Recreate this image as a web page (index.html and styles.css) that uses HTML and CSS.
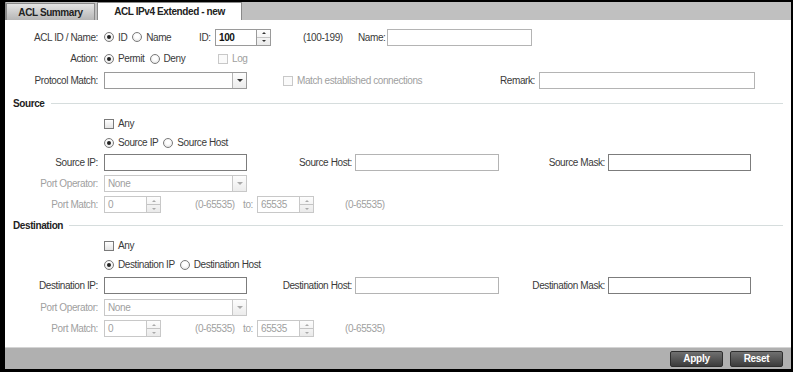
FILE: index.html
```html
<!DOCTYPE html>
<html>
<head>
<meta charset="utf-8">
<link rel="stylesheet" href="styles.css">
</head>
<body>
<div class="frame">
  <div class="tabbar">
    <div class="tab tab-summary">ACL Summary</div>
    <div class="tab tab-active">ACL IPv4 Extended - new</div>
  </div>
  <div class="content">
    <div class="row h22">
      <span class="lbl">ACL ID / Name:</span>
      <div class="cell w95">
        <span class="opt"><span class="radio on"></span>ID</span>
        <span class="opt"><span class="radio"></span>Name</span>
      </div>
      <span class="cell w13">ID:</span>
      <div class="spin w56 ml3"><span class="spin-val strong">100</span><span class="spin-btn"><i class="up"></i><i class="dn"></i></span></div>
      <span class="cell w55 ml32">(100-199)</span>
      <span class="cell w29">Name:</span>
      <span class="txt w145"></span>
    </div>
    <div class="row h21">
      <span class="lbl">Action:</span>
      <div class="cell w114">
        <span class="opt"><span class="radio on"></span>Permit</span>
        <span class="opt"><span class="radio"></span>Deny</span>
      </div>
      <span class="opt dis"><span class="check dis"></span>Log</span>
    </div>
    <div class="row h23">
      <span class="lbl">Protocol Match:</span>
      <div class="sel w143"><span class="sel-val"></span><span class="sel-btn"><i class="dn"></i></span></div>
      <div class="cell w217 ml36"><span class="opt dis"><span class="check dis"></span>Match established connections</span></div>
      <span class="cell w39">Remark:</span>
      <span class="txt w216"></span>
    </div>

    <div class="sect h22"><span>Source</span></div>
    <div class="row h19">
      <span class="lbl"></span>
      <span class="opt"><span class="check"></span>Any</span>
    </div>
    <div class="row h19">
      <span class="lbl"></span>
      <span class="opt"><span class="radio on"></span>Source IP</span>
      <span class="opt"><span class="radio"></span>Source Host</span>
    </div>
    <div class="row h21">
      <span class="lbl">Source IP:</span>
      <span class="txt dark w143"></span>
      <span class="rlbl w105">Source Host:</span>
      <span class="txt w144"></span>
      <span class="rlbl w106">Source Mask:</span>
      <span class="txt dark w143"></span>
    </div>
    <div class="row h21">
      <span class="lbl dis">Port Operator:</span>
      <div class="sel dis w143"><span class="sel-val">None</span><span class="sel-btn"><i class="dn"></i></span></div>
    </div>
    <div class="row h21">
      <span class="lbl dis">Port Match:</span>
      <div class="spin dis w57"><span class="spin-val">0</span><span class="spin-btn"><i class="up"></i><i class="dn"></i></span></div>
      <span class="cell dis w48 ml34">(0-65535)</span>
      <span class="cell dis w14">to:</span>
      <div class="spin dis w57"><span class="spin-val">65535</span><span class="spin-btn"><i class="up"></i><i class="dn"></i></span></div>
      <span class="cell dis ml31">(0-65535)</span>
    </div>

    <div class="sect h21"><span>Destination</span></div>
    <div class="row h19">
      <span class="lbl"></span>
      <span class="opt"><span class="check"></span>Any</span>
    </div>
    <div class="row h19">
      <span class="lbl"></span>
      <span class="opt"><span class="radio on"></span>Destination IP</span>
      <span class="opt"><span class="radio"></span>Destination Host</span>
    </div>
    <div class="row h22">
      <span class="lbl">Destination IP:</span>
      <span class="txt dark w143"></span>
      <span class="rlbl w105">Destination Host:</span>
      <span class="txt w144"></span>
      <span class="rlbl w106">Destination Mask:</span>
      <span class="txt dark w143"></span>
    </div>
    <div class="row h22">
      <span class="lbl dis">Port Operator:</span>
      <div class="sel dis w143"><span class="sel-val">None</span><span class="sel-btn"><i class="dn"></i></span></div>
    </div>
    <div class="row h21">
      <span class="lbl dis">Port Match:</span>
      <div class="spin dis w57"><span class="spin-val">0</span><span class="spin-btn"><i class="up"></i><i class="dn"></i></span></div>
      <span class="cell dis w48 ml34">(0-65535)</span>
      <span class="cell dis w14">to:</span>
      <div class="spin dis w57"><span class="spin-val">65535</span><span class="spin-btn"><i class="up"></i><i class="dn"></i></span></div>
      <span class="cell dis ml31">(0-65535)</span>
    </div>
  </div>
  <div class="footer">
    <button class="btn">Apply</button>
    <button class="btn">Reset</button>
  </div>
</div>
</body>
</html>
```
FILE: styles.css
```css
html, body {
  margin: 0;
  padding: 0;
  background: #000;
}
body {
  font-family: "Liberation Sans", Arial, sans-serif;
  font-size: 10px;
  letter-spacing: -0.4px;
  color: #3a3a3a;
}
.frame {
  width: 793px;
  height: 372px;
  box-sizing: border-box;
  border-style: solid;
  border-color: #000;
  border-width: 2px 2px 3px 5px;
  background: #fff;
  display: flex;
  flex-direction: column;
}
.tabbar {
  height: 18px;
  flex: none;
  background: #c0c0c0;
  border-left: 1px solid #8a8a8a;
  display: flex;
  align-items: flex-end;
  gap: 2px;
}
.tab {
  height: 17px;
  line-height: 18px;
  box-sizing: border-box;
  border: 1px solid #8a8a8a;
  border-bottom: none;
  font-weight: bold;
  font-size: 10px;
  color: #222;
  text-align: center;
  letter-spacing: -0.4px;
}
.tab-summary {
  width: 89px;
  background: linear-gradient(#e4e4e4, #b6b6b6);
}
.tab-active {
  width: 145px;
  background: #fff;
  height: 18px;
}
.content {
  flex: 1;
  padding-top: 6px;
}
.row {
  display: flex;
  align-items: center;
  white-space: nowrap;
}
.h19 { height: 19px; }
.h21 { height: 21px; }
.h22 { height: 22px; }
.h23 { height: 23px; }
.lbl {
  width: 93px;
  margin-right: 6px;
  text-align: right;
  flex: none;
}
.rlbl {
  flex: none;
  text-align: right;
  margin-right: 3px;
}
.cell {
  flex: none;
  display: flex;
  align-items: center;
}
.dis { color: #a0a0a0; }
.strong { font-weight: bold; color: #111; }
.w13 { width: 13px; }
.w14 { width: 14px; }
.w29 { width: 29px; }
.w39 { width: 39px; }
.w48 { width: 48px; }
.w55 { width: 55px; }
.w56 { width: 56px; }
.w57 { width: 57px; }
.w95 { width: 95px; }
.w105 { width: 105px; }
.w106 { width: 106px; }
.w114 { width: 114px; }
.w143 { width: 143px; }
.w144 { width: 144px; }
.w145 { width: 145px; }
.w216 { width: 216px; }
.w217 { width: 217px; }
.ml3 { margin-left: 3px; }
.ml31 { margin-left: 31px; }
.ml32 { margin-left: 32px; }
.ml34 { margin-left: 34px; }
.ml36 { margin-left: 36px; }

.opt {
  display: inline-flex;
  align-items: center;
  gap: 4px;
  margin-right: 5px;
}
.radio {
  width: 10px;
  height: 10px;
  box-sizing: border-box;
  border: 1px solid #7a7a7a;
  border-radius: 50%;
  background: radial-gradient(circle at 50% 40%, #fff 30%, #dcdcdc 100%);
  display: inline-flex;
  align-items: center;
  justify-content: center;
  flex: none;
}
.radio.on::after {
  content: "";
  width: 4px;
  height: 4px;
  border-radius: 50%;
  background: #222;
}
.check {
  width: 10px;
  height: 10px;
  box-sizing: border-box;
  border: 1px solid #7a7a7a;
  background: linear-gradient(#fff, #e4e4e4);
  flex: none;
}
.check.dis {
  border-color: #c8c8c8;
  background: #fafafa;
}

.txt {
  flex: none;
  height: 17px;
  box-sizing: border-box;
  border: 1px solid #b4b4b4;
  background: #fff;
}
.txt.dark {
  border-color: #7c7c7c;
}

.spin, .sel {
  flex: none;
  height: 17px;
  box-sizing: border-box;
  border: 1px solid #9a9a9a;
  display: flex;
  background: #fff;
}
.spin-val, .sel-val {
  flex: 1;
  padding-left: 3px;
  line-height: 15px;
}
.spin-btn {
  width: 13px;
  border-left: 1px solid #9a9a9a;
  display: flex;
  flex-direction: column;
  background: linear-gradient(#fdfdfd, #eaeaea);
}
.spin-btn i {
  flex: 1;
  display: flex;
  align-items: center;
  justify-content: center;
}
.spin-btn .up {
  border-bottom: 1px solid #c4c4c4;
}
.up::before, .dn::before {
  content: "";
  width: 0;
  height: 0;
  border-left: 2px solid transparent;
  border-right: 2px solid transparent;
}
.up::before { border-bottom: 2px solid #333; }
.dn::before { border-top: 2px solid #333; }
.sel-btn {
  width: 13px;
  border-left: 1px solid #b4b4b4;
  display: flex;
  background: linear-gradient(#fdfdfd, #ececec);
}
.sel-btn i {
  flex: 1;
  display: flex;
  align-items: center;
  justify-content: center;
}
.sel-btn .dn::before {
  border-left-width: 3px;
  border-right-width: 3px;
  border-top-width: 3px;
}
.spin.dis, .sel.dis {
  border-color: #c8c8c8;
  color: #a0a0a0;
}
.spin.dis .spin-btn, .sel.dis .sel-btn {
  border-left-color: #c8c8c8;
}
.dis .up::before { border-bottom-color: #aaa; }
.dis .dn::before { border-top-color: #aaa; }

.sect {
  display: flex;
  align-items: center;
  padding-left: 8px;
  padding-right: 8px;
  font-weight: bold;
  color: #222;
  letter-spacing: -0.4px;
}
.sect::after {
  content: "";
  flex: 1;
  height: 1px;
  margin-left: 6px;
  background: #d6dddd;
}

.footer {
  height: 22px;
  flex: none;
  box-sizing: border-box;
  background: #b0b0b0;
  border-top: 1px solid #d4d4d4;
  display: flex;
  align-items: center;
  justify-content: flex-end;
  gap: 7px;
  padding-right: 8px;
}
.btn {
  width: 53px;
  height: 16px;
  padding: 0;
  margin: 0;
  box-sizing: border-box;
  border: 1px solid #2e2e2e;
  border-radius: 2px;
  background: linear-gradient(#707070, #3c3c3c);
  color: #fff;
  font-family: "Liberation Sans", Arial, sans-serif;
  font-weight: bold;
  font-size: 10px;
  letter-spacing: -0.3px;
}
```
